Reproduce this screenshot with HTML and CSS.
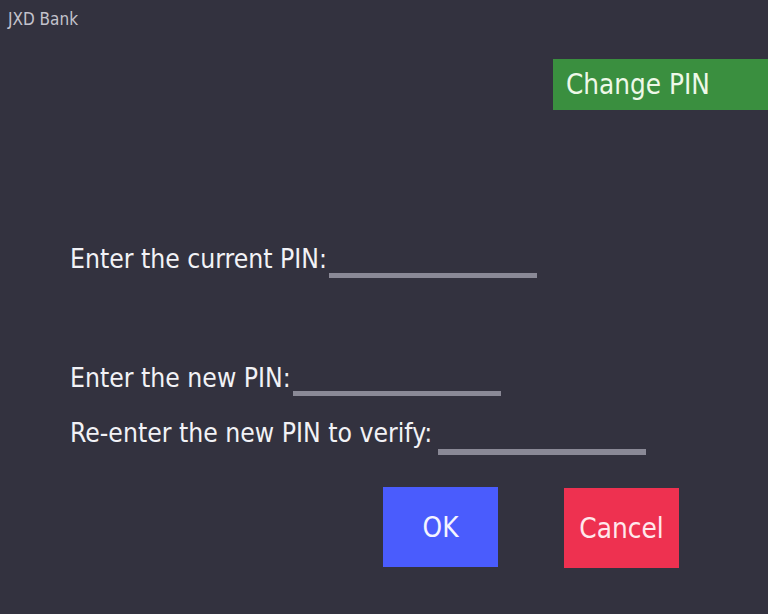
FILE: index.html
```html
<!DOCTYPE html>
<html>
<head>
<meta charset="utf-8">
<link rel="stylesheet" href="styles.css">
</head>
<body>
<div class="screen">
  <div class="brand">JXD Bank</div>
  <div class="title-row"><div class="title">Change PIN</div></div>
  <div class="form">
    <div class="field f1"><span class="label">Enter the current PIN:</span><span class="input"></span></div>
    <div class="field f2"><span class="label">Enter the new PIN:</span><span class="input"></span></div>
    <div class="field f3"><span class="label">Re-enter the new PIN to verify:</span><span class="input"></span></div>
  </div>
  <div class="actions">
    <button class="btn ok">OK</button>
    <button class="btn cancel">Cancel</button>
  </div>
</div>
</body>
</html>
```
FILE: styles.css
```css
html, body { margin: 0; padding: 0; }
body {
  background: #33323f;
  width: 768px;
  height: 614px;
  overflow: hidden;
  font-family: "DejaVu Sans Condensed", "DejaVu Sans", sans-serif;
  font-stretch: condensed;
}
.screen { display: flex; flex-direction: column; }
.brand {
  padding: 8px 0 0 8px;
  height: 22px;
  font-size: 17px;
  line-height: 22px;
  color: #c3c2cc;
}
.title-row { display: flex; justify-content: flex-end; margin-top: 29px; }
.title {
  width: 202px;
  height: 51px;
  padding-left: 13px;
  background: #3a8f3f;
  color: #eef8e8;
  font-size: 27.6px;
  line-height: 52px;
}
.form { display: flex; flex-direction: column; padding-left: 70px; margin-top: 129px; }
.field { display: flex; align-items: flex-end; font-size: 26.3px; color: #f2f2f6; height: 40px; }
.label { line-height: 40px; }
.input { width: 208px; height: 5px; background: #8a8996; margin-bottom: 1px; margin-left: 2px; }
.f2 { margin-top: 79px; }
.f2 .input { margin-bottom: 2px; }
.f3 { margin-top: 15px; }
.f3 .input { margin-left: 6px; margin-bottom: -2px; height: 6px; }
.actions { display: flex; align-items: flex-start; gap: 66px; padding-left: 383px; margin-top: 34px; }
.btn {
  width: 115px; height: 80px; border: 0; padding: 0;
  font-family: inherit; font-stretch: condensed;
  font-size: 27.7px; color: #f4f4ff;
}
.ok { background: #4a5cfd; }
.cancel { background: #ee3150; color: #ffe8ec; margin-top: 1px; }
```
